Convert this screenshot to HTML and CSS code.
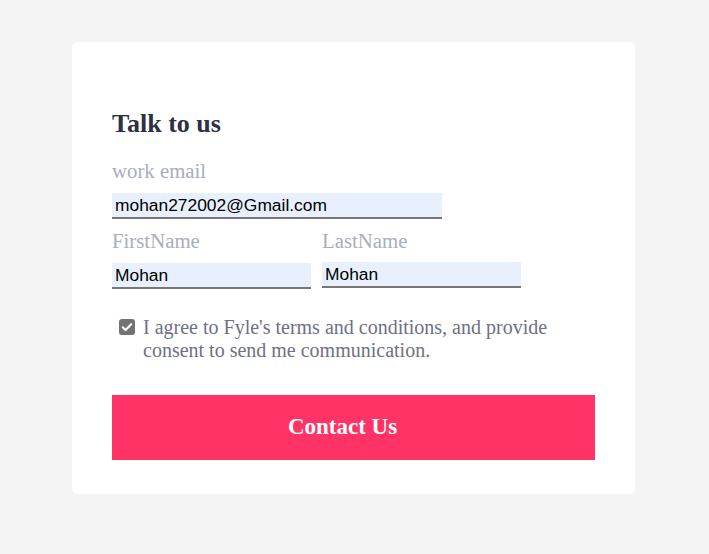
FILE: index.html
```html
<!DOCTYPE html>
<html>
<head>
<meta charset="utf-8">
<link rel="stylesheet" href="styles.css">
</head>
<body>
<div class="card">
  <h2 class="title">Talk to us</h2>
  <div class="field field-email">
    <label class="label">work email</label>
    <input class="input input-email" type="text" value="mohan272002@Gmail.com">
  </div>
  <div class="name-row">
    <div class="field">
      <label class="label">FirstName</label>
      <input class="input input-name" type="text" value="Mohan">
    </div>
    <div class="field field-last">
      <label class="label">LastName</label>
      <input class="input input-name" type="text" value="Mohan">
    </div>
  </div>
  <div class="agree">
    <span class="check"><svg width="16" height="16" viewBox="0 0 16 16"><rect x="0" y="0" width="16" height="16" rx="3" fill="#737373"/><path d="M3.8 8.3 L6.6 11 L12.2 5.2" fill="none" stroke="#fff" stroke-width="2.2" stroke-linecap="round" stroke-linejoin="round"/></svg></span>
    <p class="agree-text">I agree to Fyle's terms and conditions, and provide consent to send me communication.</p>
  </div>
  <button class="btn">Contact Us</button>
</div>
</body>
</html>
```
FILE: styles.css
```css
html, body {
  margin: 0;
  padding: 0;
}
body {
  background: #f4f4f4;
  font-family: "Liberation Serif", "Times New Roman", serif;
}
.card {
  box-sizing: border-box;
  width: 563px;
  height: 452px;
  margin: 42px 0 0 72px;
  padding: 67px 40px 0 40px;
  background: #fff;
  border-radius: 6px;
}
.title {
  margin: 0;
  font-size: 26px;
  font-weight: bold;
  color: #2d3142;
  line-height: 30px;
}
.field {
  display: flex;
  flex-direction: column;
  align-items: flex-start;
}
.label {
  font-size: 20.8px;
  line-height: 24px;
  color: #a9adc0;
  margin-top: 10px;
}
.field-email .label {
  margin-top: 20px;
}
.input {
  box-sizing: border-box;
  height: 26px;
  margin-top: 10px;
  border: none;
  border-bottom: 2px solid #777;
  background: #e8f0fe;
  padding: 0 3px;
  font-family: "Liberation Sans", Arial, sans-serif;
  font-size: 17.4px;
  color: #000;
  outline: none;
}
.input-email {
  width: 330px;
}
.input-name {
  width: 199px;
}
.name-row {
  display: flex;
  gap: 11px;
}
.field-last .input {
  margin-top: 9px;
}
.agree {
  display: flex;
  align-items: flex-start;
  margin-top: 27px;
  padding-left: 7px;
}
.check {
  display: block;
  width: 16px;
  height: 16px;
  margin-top: 3px;
  margin-right: 8px;
  flex: none;
}
.check svg {
  display: block;
}
.agree-text {
  margin: 0;
  font-size: 20px;
  line-height: 23px;
  color: #6e7086;
  width: 430px;
}
.btn {
  display: block;
  width: 483px;
  height: 65px;
  margin-top: 33px;
  border: none;
  background: #ff3366;
  color: #fff;
  font-family: "Liberation Serif", "Times New Roman", serif;
  font-weight: bold;
  font-size: 23px;
  padding: 0 22px 2px 0;
  cursor: pointer;
}
```
